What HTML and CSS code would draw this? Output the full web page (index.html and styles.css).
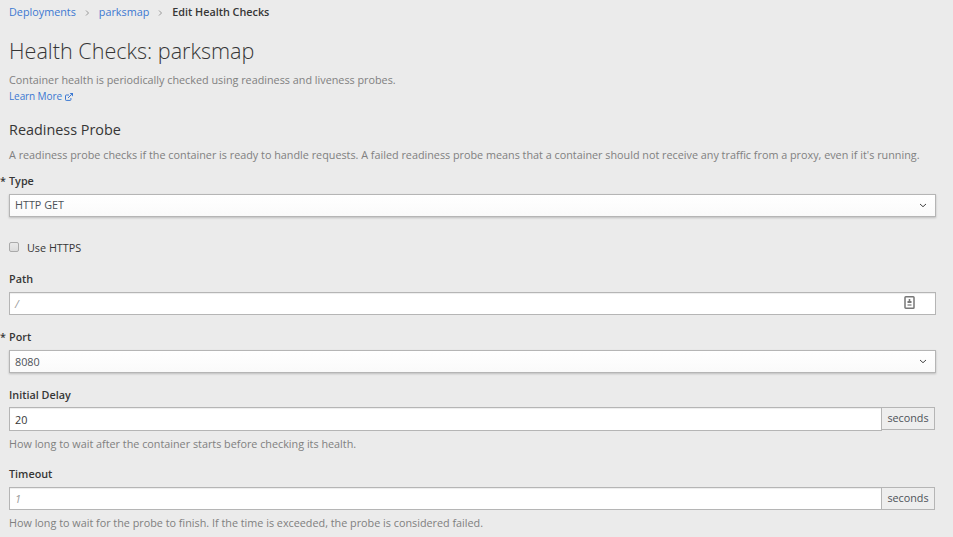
FILE: index.html
```html
<!DOCTYPE html>
<html lang="en">
<head>
<meta charset="utf-8">
<title>Edit Health Checks</title>
<link rel="stylesheet" href="styles.css">
</head>
<body>
<nav class="crumbs"><a>Deployments</a><svg viewBox="0 0 5 8"><path d="M1 1.5l2.5 2.5-2.5 2.5"/></svg><a>parksmap</a><svg viewBox="0 0 5 8"><path d="M1 1.5l2.5 2.5-2.5 2.5"/></svg><strong>Edit Health Checks</strong></nav>
<h1>Health Checks: parksmap</h1>
<p class="intro">Container health is periodically checked using readiness and liveness probes.</p>
<a class="learn">Learn More<svg viewBox="0 0 8 8"><path d="M4 2H1.2a.7.7 0 0 0-.7.7v4a.7.7 0 0 0 .7.7h4a.7.7 0 0 0 .7-.7V5M3 5L6.5 1.5"/><path class="tip" d="M4.6 0H8v3.4z"/></svg></a>
<h2>Readiness Probe</h2>
<p class="desc">A readiness probe checks if the container is ready to handle requests. A failed readiness probe means that a container should not receive any traffic from a proxy, even if it's running.</p>
<label class="type required">Type</label>
<div class="field select"><span>HTTP GET</span><svg class="chev" viewBox="0 0 8 5"><path d="M1 1l3 2.7L7 1"/></svg></div>
<div class="check"><span class="box"></span><span>Use HTTPS</span></div>
<label class="path">Path</label>
<div class="field"><span class="hint">/</span><svg class="card" viewBox="0 0 11 13"><rect x="1" y=".8" width="9" height="11.4" rx=".8"/><path class="person" d="M4.7 3h1.6v2h1.2v2h-4V5h1.2z"/><path class="person pale" d="M3.5 8h4v2h-4z"/></svg></div>
<label class="port required">Port</label>
<div class="field select"><span>8080</span><svg class="chev" viewBox="0 0 8 5"><path d="M1 1l3 2.7L7 1"/></svg></div>
<label class="delay">Initial Delay</label>
<div class="group tall"><div class="field"><span class="value">20</span></div><span class="unit">seconds</span></div>
<p class="help">How long to wait after the container starts before checking its health.</p>
<label class="timeout">Timeout</label>
<div class="group"><div class="field"><span class="hint">1</span></div><span class="unit">seconds</span></div>
<p class="help">How long to wait for the probe to finish. If the time is exceeded, the probe is considered failed.</p>
</body>
</html>
```
FILE: styles.css
```css
*{box-sizing:border-box}
body{margin:0;padding:4px 17px 0 9px;height:537px;overflow:hidden;background:#ebebeb;color:#363636;font:10.8px/16px "Open Sans",sans-serif}
h1,h2,p{margin:0;font-weight:400}
a{color:#3b78d2}
svg{fill:none;stroke:currentColor}
.crumbs{display:flex;align-items:center;height:16px}
.crumbs svg{width:5px;height:8px;margin:2px 9px 0;color:#999}
.crumbs strong,label{font-weight:600}
h1{font-size:21.6px;line-height:30px;font-weight:300;margin-top:16px}
p{color:#808080;white-space:nowrap}
.intro{margin-top:6px}
.learn{display:block;font-size:10px;letter-spacing:-.1px}
.learn svg{width:8px;height:8px;margin-left:3px;vertical-align:-1px}
.learn .tip{fill:currentColor;stroke:none}
h2{font-size:14.4px;line-height:20px;margin-top:16px}
.desc{margin-top:7px}
label{display:block;position:relative}
.required::before{content:"*";position:absolute;left:-9px}
.type{margin-top:10px}
.field{display:flex;align-items:center;justify-content:space-between;width:927px;height:23px;margin-top:5px;padding:0 5px;border:1px solid #b5b5b5;background:#fff;box-shadow:inset 0 1px 1px #00000013}
.select{background:linear-gradient(#fff,#fafafa);box-shadow:0 1px 2px #0003;color:#4d5258}
.select span{margin-top:-1px}
.port + .select span{margin-top:0}
.chev{width:8px;height:5px;margin-right:3px;color:#444}
.check{display:flex;align-items:center;gap:8px;height:16px;margin-top:23px}
.box{width:10px;height:10px;margin-top:-2px;border:1px solid #aaa;border-radius:2px;background:linear-gradient(#e9e9e9,#dcdcdc)}
.path{margin-top:15px}
.hint{color:#999;font-style:italic}
.card{width:11px;height:13px;margin-right:15px;margin-top:-2px;color:#777;stroke-width:1.5}
.person{fill:currentColor;stroke:none}
.pale{opacity:.6}
.port,.delay{margin-top:14px}
.group{display:flex;width:926px;margin-top:5px}
.group .field{flex:1;width:auto;margin:0}
.tall{height:23px;margin-top:4px}
.tall .field{height:24px}
.tall .value{margin-top:2px}
.unit{width:53px;height:23px;padding-top:2px;text-align:center;border:1px solid #b5b5b5;border-left:0;background:#eee;color:#4d5258}
.help{margin-top:5px}
.tall + .help{margin-top:6px}
.timeout{margin-top:14px}
```
